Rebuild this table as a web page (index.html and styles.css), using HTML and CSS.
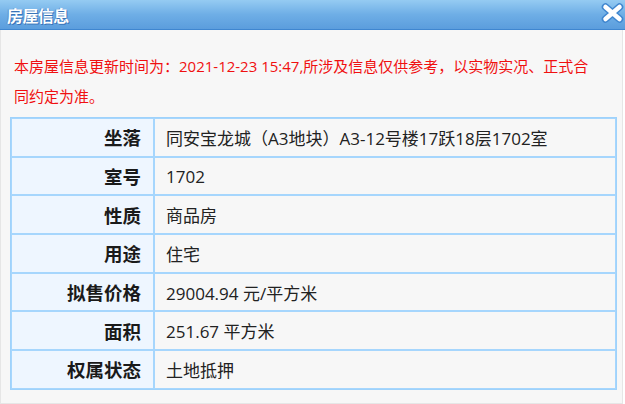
FILE: index.html
```html
<!DOCTYPE html>
<html lang="zh-CN">
<head>
<meta charset="utf-8">
<title>房屋信息</title>
<link rel="stylesheet" href="styles.css">
</head>
<body>
<div class="dialog">
  <div class="titlebar">
    <span class="title">房屋信息</span>
    <span class="close">
      <svg width="23" height="20" viewBox="0 0 23 20">
        <path d="M4.5 4 L18.5 16 M18.5 4 L4.5 16" stroke="#3f86cf" stroke-width="7.5" stroke-linecap="round"/>
        <path d="M4.5 4 L18.5 16 M18.5 4 L4.5 16" stroke="#ffffff" stroke-width="4.5" stroke-linecap="round"/>
      </svg>
    </span>
  </div>
  <div class="content">
    <p class="notice">本房屋信息更新时间为：2021-12-23 15:47,所涉及信息仅供参考，以实物实况、正式合同约定为准。</p>
    <table class="info">
      <tr><th>坐落</th><td>同安宝龙城（A3地块）A3-12号楼17跃18层1702室</td></tr>
      <tr><th>室号</th><td>1702</td></tr>
      <tr><th>性质</th><td>商品房</td></tr>
      <tr><th>用途</th><td>住宅</td></tr>
      <tr><th>拟售价格</th><td>29004.94 元/平方米</td></tr>
      <tr><th>面积</th><td>251.67 平方米</td></tr>
      <tr><th>权属状态</th><td>土地抵押</td></tr>
    </table>
  </div>
</div>
</body>
</html>
```

FILE: styles.css
```css
html, body {
  margin: 0;
  padding: 0;
  background: #ffffff;
}
body {
  font-family: "Open Sans", "Noto Sans CJK SC", sans-serif;
  color: #222;
}
.dialog {
  width: 623px;
  height: 404px;
  box-sizing: border-box;
  display: flex;
  flex-direction: column;
}
.titlebar {
  height: 30px;
  border-bottom: 1px solid #3f86d0;
  background: linear-gradient(#95cbf2, #6eaee6 50%, #5b9ddd);
  display: flex;
  align-items: center;
  justify-content: space-between;
  padding: 0 1px 0 7px;
  width: 625px;
  box-sizing: border-box;
}
.title {
  color: #fff;
  font-family: "Noto Sans CJK SC", sans-serif;
  font-weight: bold;
  font-size: 16px;
  letter-spacing: -0.6px;
  text-shadow: 1px 1px 0 #3a74b8, -1px 0 0 #5b8fd0;
}
.close {
  display: flex;
  margin-top: -4px;
}
.content {
  flex: 1;
  background: #f7f7f7;
  border: 1px solid #e6e6e6;
  border-top: none;
  padding: 21px 5px 0 9px;
}
.notice {
  margin: 0 0 6px 4px;
  color: #f01010;
  font-size: 15px;
  line-height: 30px;
  width: 585px;
}
.info {
  width: 607px;
  border-collapse: separate;
  border-spacing: 0;
  border: 1px solid #9fd2fb;
  font-size: 17px;
}
.info th, .info td {
  border: 1px solid #a6d6fd;
  height: 36.7px;
  padding: 0;
}
.info th {
  width: 129px;
  text-align: right;
  padding-right: 12px;
  background: #eef6ff;
  font-weight: bold;
  color: #1a1a1a;
  font-size: 18.5px;
  font-family: "Noto Sans CJK SC", sans-serif;
}
.info td {
  padding-left: 11px;
  background: #f7f7f7;
  color: #222;
}
```
